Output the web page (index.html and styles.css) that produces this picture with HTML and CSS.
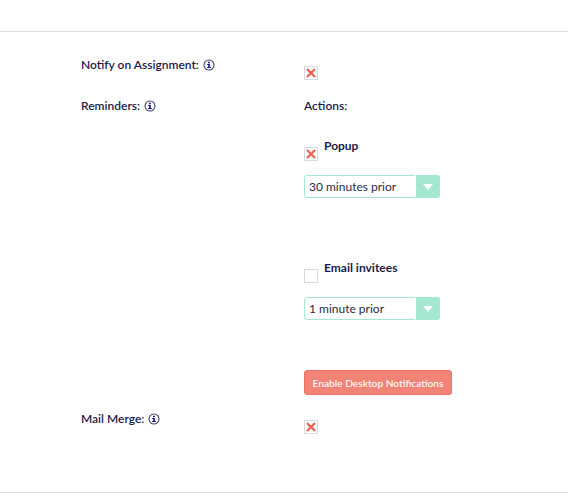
FILE: index.html
```html
<!DOCTYPE html>
<html lang="en">
<head>
<meta charset="utf-8">
<title>Settings</title>
<link rel="stylesheet" href="styles.css">
</head>
<body>
<svg class="defs" width="0" height="0" aria-hidden="true">
  <symbol id="info" viewBox="0 0 12 12">
    <circle cx="6" cy="6" r="5" fill="#fff" stroke="#3f4468" stroke-width="1.100"/>
    <path d="M5 2.700h1.800v1.500H5zM4.200 5h2.600v3.100h1v1H4.200v-1h1V6h-1z" fill="#10108a"/>
  </symbol>
  <symbol id="cross" viewBox="0 0 14 14">
    <rect x=".5" y=".5" width="13" height="13" fill="#fff" stroke="#d5d9e2"/>
    <path d="M3 3l8 8M11 3l-8 8" stroke="#f0604f" stroke-width="2.200" fill="none"/>
  </symbol>
</svg>
<main class="panel">
  <div class="row row-notify">
    <div class="label">Notify on Assignment: <svg class="info"><use href="#info"/></svg></div>
    <div class="value"><svg class="check"><use href="#cross"/></svg></div>
  </div>
  <div class="row row-reminders">
    <div class="label">Reminders: <svg class="info"><use href="#info"/></svg></div>
    <div class="value">
      <div class="actions">Actions:</div>
      <div class="option option-popup">
        <div class="check-line"><svg class="check"><use href="#cross"/></svg><span class="option-name">Popup</span></div>
        <div class="select"><span class="select-text">30 minutes prior</span><span class="select-arrow"><i class="tri"></i></span></div>
      </div>
      <div class="option option-email">
        <div class="check-line"><span class="check empty"></span><span class="option-name">Email invitees</span></div>
        <div class="select"><span class="select-text">1 minute prior</span><span class="select-arrow"><i class="tri"></i></span></div>
      </div>
      <button class="enable" type="button">Enable Desktop Notifications</button>
    </div>
  </div>
  <div class="row row-merge">
    <div class="label">Mail Merge: <svg class="info"><use href="#info"/></svg></div>
    <div class="value"><svg class="check"><use href="#cross"/></svg></div>
  </div>
</main>
</body>
</html>
```
FILE: styles.css
```css
* { box-sizing: border-box; }
html, body { margin: 0; padding: 0; background: #fff; }
body { font-family: Lato, sans-serif; font-size: 12px; color: #1b1a4a; height: 500px; overflow: hidden; padding-top: 31px; }
.defs { position: absolute; }
.panel { height: 462px; border-top: 1px solid #e0e0e0; border-bottom: 1px solid #e0e0e0; padding: 25px 0 0 81px; }
.row { display: grid; grid-template-columns: 223px 1fr; }
.row-notify { height: 41px; }
.row-reminders { height: 313px; }
.label { font-weight: 600; line-height: 15px; white-space: nowrap; }
.info { width: 12px; height: 12px; vertical-align: -2px; margin-left: 1px; }
.value { min-width: 0; }
.row-notify .value, .row-merge .value { padding-top: 9px; }
.check { display: block; width: 14px; height: 14px; flex: none; margin-top: 6px; }
.check.empty { background: #fff; border: 1px solid #d5d9e2; }
.actions { font-weight: 600; line-height: 15px; }
.option { display: flex; flex-direction: column; align-items: flex-start; }
.option-popup { margin-top: 28px; height: 122px; }
.option-email { height: 107px; }
.check-line { display: flex; gap: 6px; height: 34px; }
.option-name { font-weight: 700; line-height: 14px; margin-top: -2px; }
.select { display: flex; width: 136px; height: 23px; border: 1px solid #a5e8d2; border-radius: 3px; background: #fff; font-size: 12px; color: #2b2b45; }
.select-text { flex: 1; padding-left: 4px; line-height: 21px; }
.select-arrow { width: 25px; background: #a5e8d2; display: flex; align-items: center; justify-content: center; margin: -1px -1px -1px 0; border-radius: 0 3px 3px 0; border-left: 1px solid #fff; }
.tri { width: 0; height: 0; border-left: 5.500px solid transparent; border-right: 5.500px solid transparent; border-top: 6px solid #fff; }
.enable { display: block; width: 148px; height: 25px; padding: 0; background: #f28377; border: 1px solid #ee7163; border-radius: 3px; color: #fff; font-family: Lato, sans-serif; font-size: 10.200px; font-weight: 500; white-space: nowrap; }
.row-notify .check, .row-merge .check { margin-top: 0; }
```
